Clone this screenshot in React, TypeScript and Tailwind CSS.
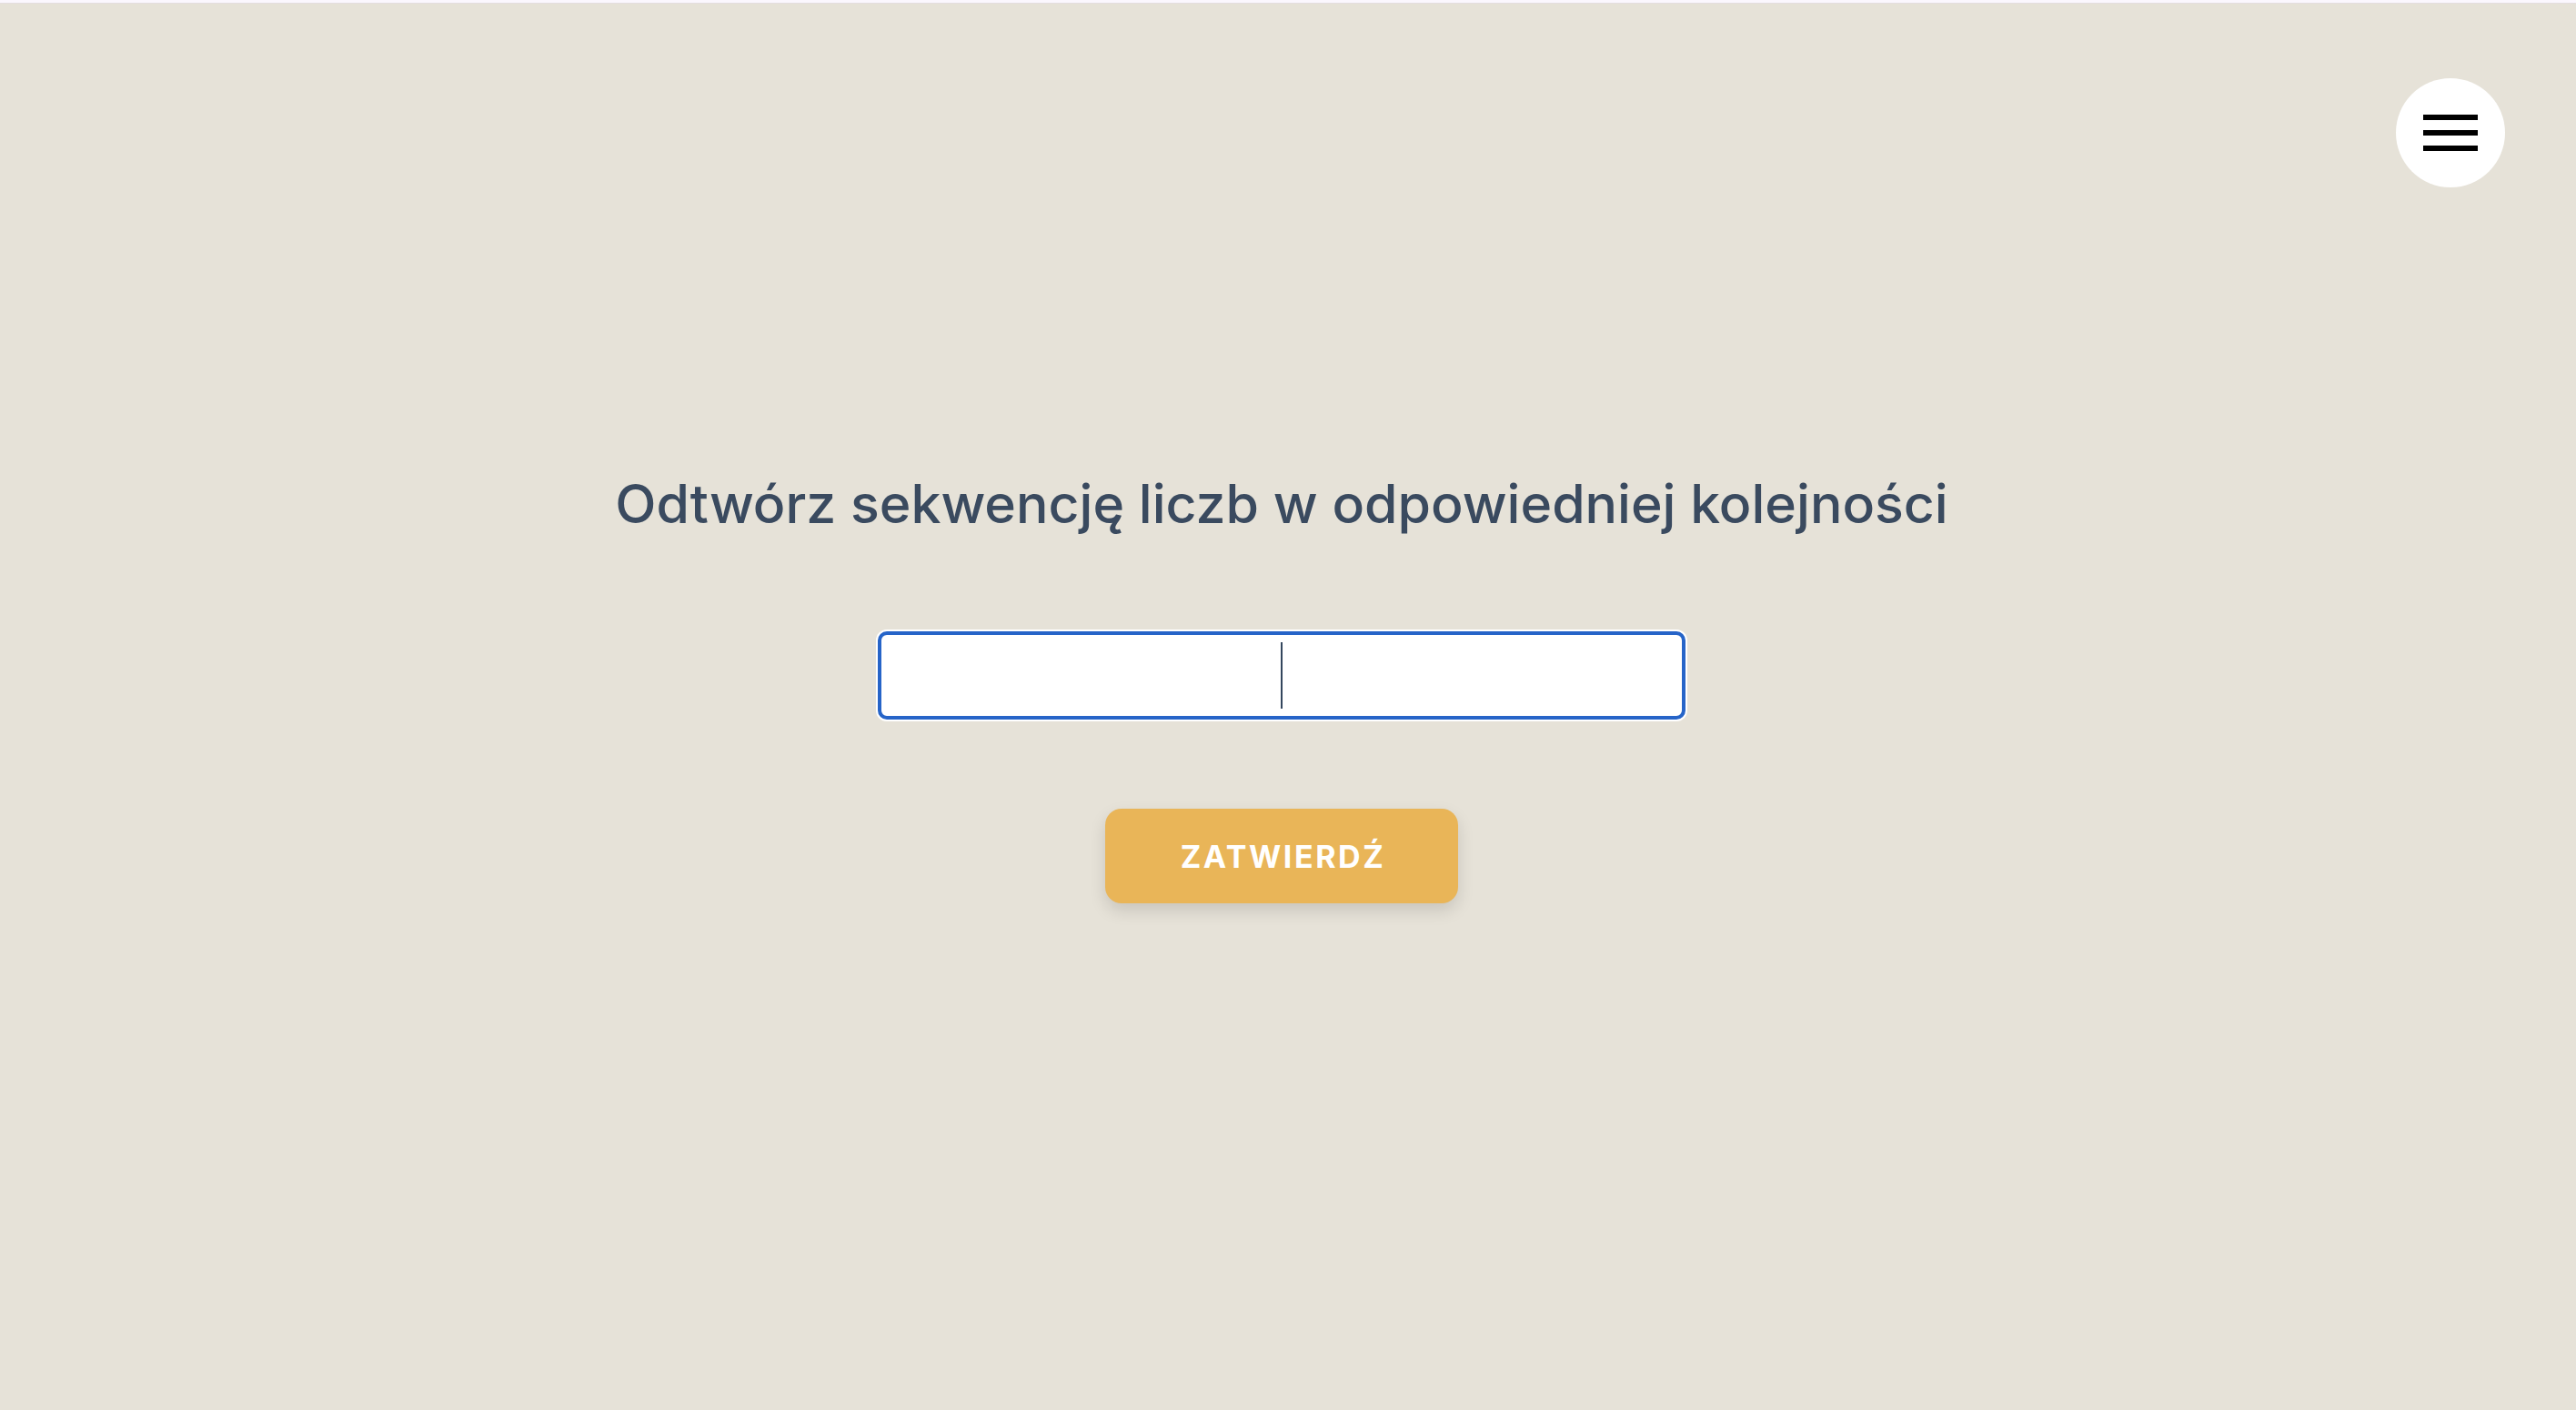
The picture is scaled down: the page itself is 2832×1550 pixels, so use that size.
import { useState } from 'react';

export default function App() {
  const [value, setValue] = useState('');

  return (
    <div className="min-h-screen bg-[#e6e2d8] font-['Inter',sans-serif]">
      {/* top strip */}
      <div className="h-[4px] bg-[#fbf7fe] border-b border-[#e4dee0]" />

      {/* menu button */}
      <header className="flex justify-end pt-[82px] pr-[78px]">
        <button className="w-[120px] h-[120px] rounded-full bg-white flex flex-col items-center justify-center gap-[11px]">
          <span className="block w-[60px] h-[6px] bg-black" />
          <span className="block w-[60px] h-[6px] bg-black" />
          <span className="block w-[60px] h-[6px] bg-black" />
        </button>
      </header>

      {/* Game */}
      <main className="flex flex-col items-center pr-[14px] pt-[312px]">
        <h1 className="text-[59px] leading-[72px] font-medium text-[#3a4a5f] tracking-normal">
          Odtwórz sekwencję liczb w odpowiedniej kolejności
        </h1>

        <div className="relative mt-[104px]">
          <input
            type="text"
            value={value}
            onChange={(e) => setValue(e.target.value)}
            className="w-[888px] h-[97px] bg-white border-[4px] border-[#2664c8] rounded-[10px] shadow-[0_0_0_2px_#ffffff] text-center text-[40px] text-[#3a4a5f] outline-none caret-transparent"
          />
          {value === '' && (
            <span className="absolute left-1/2 top-[12px] w-[2px] h-[73px] bg-[#34475e] -translate-x-1/2" />
          )}
        </div>

        <button className="mt-[98px] w-[388px] h-[104px] rounded-[18px] bg-[#e9b558] text-white text-[34px] font-bold tracking-[0.075em] pl-[3px] shadow-[0_8px_18px_rgba(0,0,0,0.13)]">
          ZATWIERDŹ
        </button>
      </main>
    </div>
  );
}
